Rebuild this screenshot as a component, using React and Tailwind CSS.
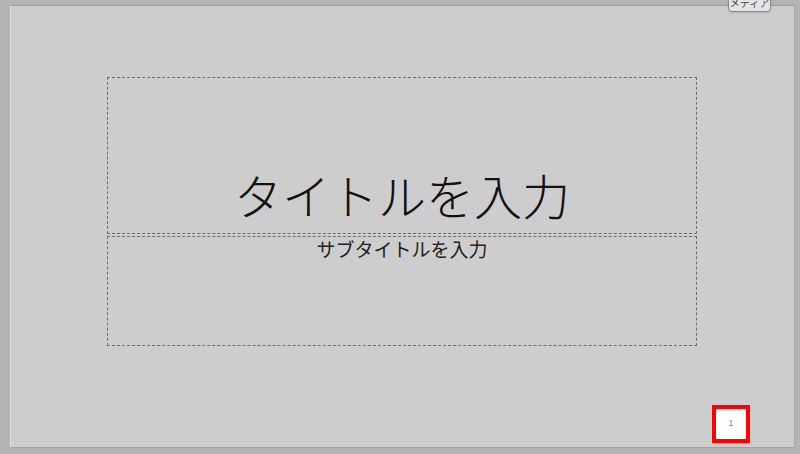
import React from 'react';

const jp = { fontFamily: '"Noto Sans CJK JP", "Noto Sans", sans-serif' };

function App() {
  return (
    <div className="relative w-[800px] h-[454px] overflow-hidden bg-[#b4b4b4] flex pt-[5px] pl-[10px] pr-[5px] pb-[6px]" style={jp}>
      {/* slide */}
      <div className="flex-1 flex flex-col bg-[#cdcdcd] border-t border-t-[#9c9c9c] border-l border-l-[#dedede] border-r border-r-[#a8a8a8] border-b border-b-[#a0a0a0]">
        <div className="mt-[71px] ml-[96px] w-[590px] h-[157px] border border-dashed border-[#6e6e6e] flex items-end justify-center pb-[15px]">
          <span className="text-[48px] leading-none font-light text-[#111]">タイトルを入力</span>
        </div>
        <div className="mt-[2px] ml-[96px] w-[590px] h-[110px] border border-dashed border-[#6e6e6e] flex justify-center">
          <span className="text-[19px] leading-[24px] text-[#222]">サブタイトルを入力</span>
        </div>
        <div className="mt-[59px] ml-[701px] w-[38px] h-[38px] border-[4px] border-[#ff0000] bg-white flex items-center justify-center">
          <span className="text-[9px] text-[#888]" style={{ fontFamily: '"Liberation Sans", sans-serif' }}>1</span>
        </div>
      </div>

      {/* tooltip cut by top edge */}
      <div className="absolute left-[728px] top-[-7px] w-[43px] h-[19px] rounded-[4px] border border-[#8a8a8a] bg-[#e4e4e4] flex items-center justify-center shadow-sm">
        <span className="text-[10px] text-[#444] leading-none">メディア</span>
      </div>
    </div>
  );
}

export default App;
